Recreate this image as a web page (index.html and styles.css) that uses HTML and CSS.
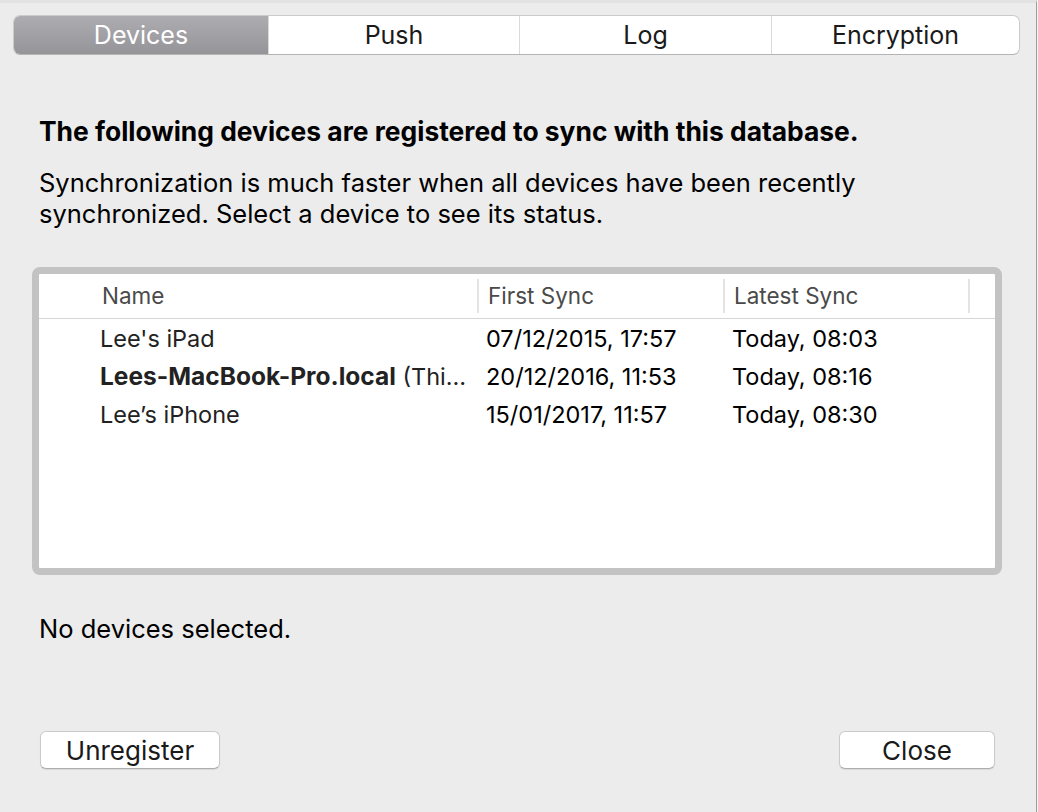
FILE: index.html
```html
<!DOCTYPE html>
<html lang="en">
<head>
  <meta charset="UTF-8">
  <title>Sync Devices</title>
  <link rel="stylesheet" href="styles.css">
</head>
<body>

  <div class="window">
    <!-- Tab bar -->
    <div class="tabs">
      <div class="tab active">Devices</div>
      <div class="tab">Push</div>
      <div class="tab">Log</div>
      <div class="tab">Encryption</div>
    </div>

    <div class="intro">
      <h3>The following devices are registered to sync with this database.</h3>
      <p>Synchronization is much faster when all devices have been recently<br>synchronized. Select a device to see its status.</p>
    </div>

    <!-- Device list -->
    <div class="device-table">
      <div class="table-head">
        <div class="col col-icon"></div>
        <div class="col col-name">Name</div>
        <div class="col col-first">First Sync</div>
        <div class="col col-latest">Latest Sync</div>
        <div class="col col-rest"></div>
      </div>
      <div class="table-row">
        <div class="cell col-icon"></div>
        <div class="cell col-name">Lee's iPad</div>
        <div class="cell col-first">07/12/2015, 17:57</div>
        <div class="cell col-latest">Today, 08:03</div>
      </div>
      <div class="table-row">
        <div class="cell col-icon"></div>
        <div class="cell col-name"><strong>Lees-MacBook-Pro.local</strong> (Thi…</div>
        <div class="cell col-first">20/12/2016, 11:53</div>
        <div class="cell col-latest">Today, 08:16</div>
      </div>
      <div class="table-row">
        <div class="cell col-icon"></div>
        <div class="cell col-name">Lee’s iPhone</div>
        <div class="cell col-first">15/01/2017, 11:57</div>
        <div class="cell col-latest">Today, 08:30</div>
      </div>
    </div>

    <p class="status">No devices selected.</p>

    <div class="actions">
      <button class="btn btn-unregister">Unregister</button>
      <button class="btn btn-close">Close</button>
    </div>
  </div>

</body>
</html>
```

FILE: styles.css
```css
:root {
  --window-color: #ececec;
  --text-color: #000;
  --header-text: #4a4a4a;
  --line-color: #d6d6d6;
  --frame-color: #c3c3c3;
  --white-color: #fff;
}

body {
  margin: 0;
  background-color: #f4f4f4;
  font-family: 'Inter', 'Liberation Sans', sans-serif;
  color: var(--text-color);
}

.window {
  width: 1037px;
  height: 812px;
  box-sizing: border-box;
  background-color: var(--window-color);
  border-top: 3px solid #e3e3e3;
  border-right: 1px solid #9d9d9d;
  overflow: hidden;
}

/* Tabs */
.tabs {
  display: grid;
  grid-template-columns: 254px 251px 252px 1fr;
  height: 40px;
  margin: 12px 16px 0 13px;
  background-color: var(--white-color);
  border: 1px solid #cbcbcb;
  border-bottom-color: #b4b4b4;
  border-radius: 7px;
  box-sizing: border-box;
  overflow: hidden;
}

.tab {
  display: flex;
  align-items: center;
  justify-content: center;
  font-size: 25px;
  color: #1a1a1a;
  border-left: 1px solid #dadada;
}

.tab:first-child {
  border-left: none;
}

.tab.active {
  background: linear-gradient(#adacb1, #959499);
  color: var(--white-color);
}

/* Intro text */
.intro {
  margin: 61px 0 0 39px;
}

.intro h3 {
  margin: 0;
  font-size: 26.4px;
  line-height: 31px;
  font-weight: bold;
}

.intro p {
  margin: 20px 0 0;
  font-size: 25.5px;
  line-height: 31px;
}

/* Table */
.device-table {
  height: 308px;
  margin: 38px 34px 0 32px;
  background-color: var(--white-color);
  border: 7px solid var(--frame-color);
  border-radius: 8px;
  box-sizing: border-box;
}

.table-head,
.table-row {
  display: flex;
}

.table-head {
  height: 44px;
  border-bottom: 1px solid var(--line-color);
  align-items: center;
  font-size: 22.5px;
  color: var(--header-text);
}

.col-icon { width: 54px; }
.col-name { width: 386px; }
.col-first { width: 246px; }
.col-latest { width: 245px; }
.col-rest { flex: 1; }

.table-head .col {
  box-sizing: border-box;
  padding-left: 9px;
  border-right: 2px solid #e3e3e3;
  line-height: 34px;
}

.table-head .col-icon {
  padding-left: 0;
}

.table-head .col-rest {
  border-right: none;
}

.table-row {
  height: 38px;
  align-items: center;
  font-size: 23.5px;
}

.table-row .col-name strong {
  font-size: 24.5px;
}

.cell {
  box-sizing: border-box;
  padding-left: 7px;
  white-space: nowrap;
  overflow: hidden;
}

.col-name.cell {
  color: #222;
}

.status {
  margin: 38px 0 0 39px;
  font-size: 25.5px;
  line-height: 31px;
}

/* Buttons */
.actions {
  display: flex;
  justify-content: space-between;
  margin: 87px 41px 0 40px;
}

.btn {
  height: 38px;
  background-color: var(--white-color);
  border: 1px solid #cacaca;
  border-bottom-color: #adadad;
  border-radius: 6px;
  box-shadow: 0 1px 1px rgba(0, 0, 0, 0.08);
  font-family: inherit;
  font-size: 26px;
  color: #1a1a1a;
  padding: 0;
}

.btn-unregister { width: 180px; }
.btn-close { width: 156px; }
```
